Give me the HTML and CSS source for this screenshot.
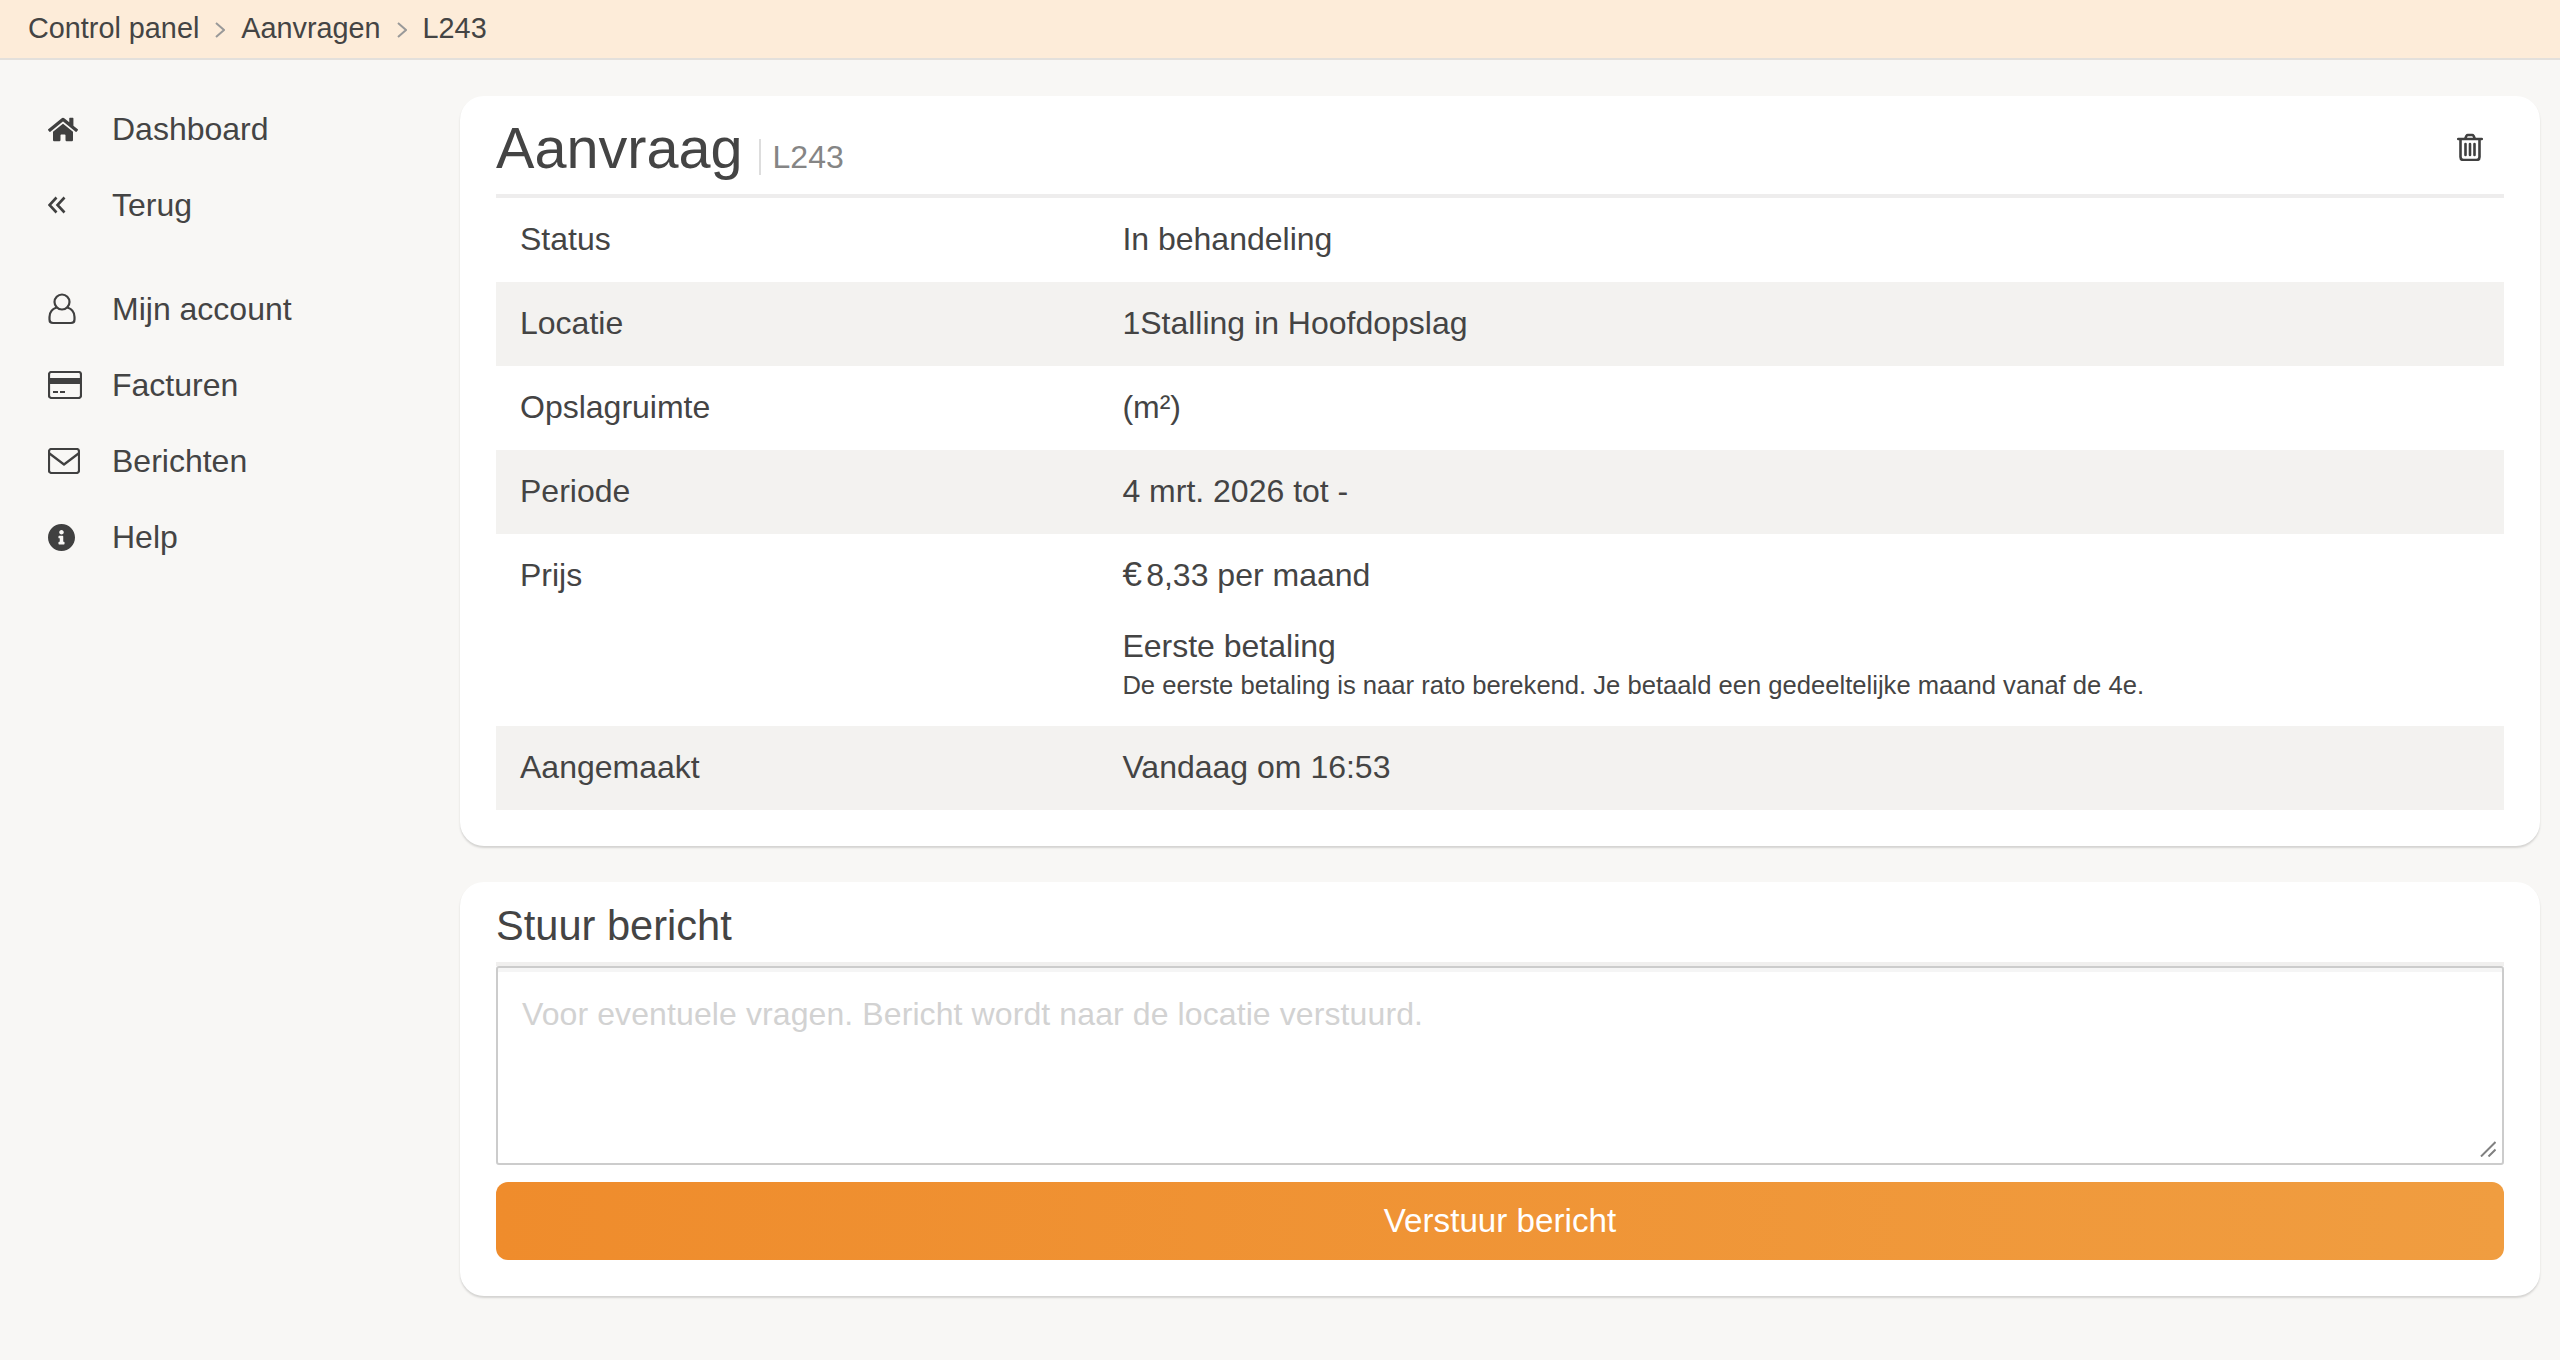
FILE: index.html
```html
<!DOCTYPE html>
<html lang="nl">
<head>
<meta charset="utf-8">
<title>Aanvraag L243</title>
<link rel="stylesheet" href="styles.css">
</head>
<body>
<nav class="crumbs">
  <a class="crumb">Control panel</a>
  <svg class="chev" viewBox="0 0 10 16"><path d="M1 1l8 7-8 7"/></svg>
  <a class="crumb">Aanvragen</a>
  <svg class="chev" viewBox="0 0 10 16"><path d="M1 1l8 7-8 7"/></svg>
  <a class="crumb">L243</a>
</nav>
<div class="layout">
  <aside class="side">
    <ul class="menu">
      <li class="item"><span class="ico"><svg class="i-home" viewBox="0 0 576 512"><path class="fill" d="M280.37 148.26L96 300.11V464a16 16 0 0 0 16 16l112.06-.29a16 16 0 0 0 15.92-16V368a16 16 0 0 1 16-16h64a16 16 0 0 1 16 16v95.64a16 16 0 0 0 16 16.05L464 480a16 16 0 0 0 16-16V300L295.67 148.26a12.19 12.19 0 0 0-15.3 0zM571.6 251.47L488 182.56V44.05a12 12 0 0 0-12-12h-56a12 12 0 0 0-12 12v72.61L318.47 43a48 48 0 0 0-61 0L4.34 251.47a12 12 0 0 0-1.6 16.9l25.5 31A12 12 0 0 0 45.15 301l235.22-193.74a12.19 12.19 0 0 1 15.3 0L530.9 301a12 12 0 0 0 16.9-1.6l25.5-31a12 12 0 0 0-1.7-16.93z"/></svg></span>Dashboard</li>
      <li class="item"><span class="ico"><svg class="i-back" viewBox="0 0 18 18"><path class="line-b" d="M8.500 1.500L1.500 9l7 7.500M16.500 1.500L9.500 9l7 7.500"/></svg></span>Terug</li>
    </ul>
    <ul class="menu">
      <li class="item"><span class="ico"><svg class="i-user" viewBox="0 0 28 32"><circle class="line" cx="14" cy="9" r="7.500"/><path class="line" d="M8.500 14.500C4 16 1.500 19 1.500 24v2.500c0 2 1.500 3.500 3.500 3.500h18c2 0 3.500-1.500 3.500-3.500V24c0-5-2.500-8-7-9.500"/></svg></span>Mijn account</li>
      <li class="item"><span class="ico"><svg class="i-card" viewBox="0 0 34 28"><rect class="line" x="1" y="1" width="32" height="26" rx="2.500"/><rect class="fill" x="1" y="7" width="32" height="6"/><rect class="fill" x="5" y="20" width="5" height="2"/><rect class="fill" x="12" y="20" width="5" height="2"/></svg></span>Facturen</li>
      <li class="item"><span class="ico"><svg class="i-mail" viewBox="0 0 32 26"><rect class="line" x="1" y="1" width="30" height="24" rx="2.500"/><path class="line" d="M1.500 5.500L16 16.500 30.500 5.500"/></svg></span>Berichten</li>
      <li class="item"><span class="ico"><svg class="i-info" viewBox="8 8 496 496"><path class="fill" d="M256 8C119.043 8 8 119.083 8 256c0 136.997 111.043 248 248 248s248-111.003 248-248C504 119.083 392.957 8 256 8zm0 110c23.196 0 42 18.804 42 42s-18.804 42-42 42-42-18.804-42-42 18.804-42 42-42zm56 254c0 6.627-5.373 12-12 12h-88c-6.627 0-12-5.373-12-12v-24c0-6.627 5.373-12 12-12h12v-64h-12c-6.627 0-12-5.373-12-12v-24c0-6.627 5.373-12 12-12h64c6.627 0 12 5.373 12 12v100h12c6.627 0 12 5.373 12 12v24z"/></svg></span>Help</li>
    </ul>
  </aside>
  <main class="main">
    <section class="card">
      <header class="card-head">
        <h1 class="title">Aanvraag</h1>
        <span class="sub">L243</span>
        <svg class="i-trash" viewBox="0 0 26 28"><path class="line-t" d="M1.200 6h23.600M8 6l1.500-3.200c.3-.5.800-.8 1.300-.8h4.400c.5 0 1 .3 1.300.8L18 6M3.500 6v18c0 1.700 1.300 3 3 3h13c1.700 0 3-1.300 3-3V6"/><path class="line-t" d="M8.500 11v11M13 11v11M17.500 11v11"/></svg>
      </header>
      <div class="table">
        <div class="row"><div class="cell">Status</div><div class="cell">In behandeling</div></div>
        <div class="row alt"><div class="cell">Locatie</div><div class="cell">1Stalling in Hoofdopslag</div></div>
        <div class="row"><div class="cell">Opslagruimte</div><div class="cell">(m²)</div></div>
        <div class="row alt"><div class="cell">Periode</div><div class="cell">4 mrt. 2026 tot -</div></div>
        <div class="row">
          <div class="cell">Prijs</div>
          <div class="cell">
            <p class="price"><span class="eur">€</span>8,33 per maand</p>
            <p class="first">Eerste betaling</p>
            <p class="note">De eerste betaling is naar rato berekend. Je betaald een gedeeltelijke maand vanaf de 4e.</p>
          </div>
        </div>
        <div class="row alt"><div class="cell">Aangemaakt</div><div class="cell">Vandaag om 16:53</div></div>
      </div>
    </section>
    <section class="card card-msg">
      <h2 class="msg-title">Stuur bericht</h2>
      <div class="msg-wrap">
        <textarea class="msg" placeholder="Voor eventuele vragen. Bericht wordt naar de locatie verstuurd."></textarea>
        <svg class="grip" viewBox="0 0 16 16"><path d="M1 15.500L15.500 1M8.500 15.500l7-7"/></svg>
      </div>
      <button class="send" type="button">Verstuur bericht</button>
    </section>
  </main>
</div>
</body>
</html>
```
FILE: styles.css
```css
* { box-sizing: border-box; }
html, body { margin: 0; padding: 0; }
body {
  min-height: 1360px;
  background: #f8f7f5;
  color: #444;
  font-family: "Liberation Sans", Arial, sans-serif;
  font-size: 32px;
}
.crumbs {
  display: flex;
  align-items: center;
  height: 60px;
  padding: 0 0 1px 28px;
  background: #fdecd9;
  border-bottom: 2px solid #e3e0dc;
  font-size: 28.8px;
}
.chev { width: 10px; height: 16px; margin: 2px 16px 0; }
.chev path { fill: none; stroke: #999; stroke-width: 2; }
.layout { display: flex; }
.side { width: 460px; flex: none; padding: 31px 0 0 48px; }
.menu { list-style: none; margin: 0 0 28px; padding: 0; }
.item { display: flex; align-items: center; height: 76px; }
.ico { width: 64px; flex: none; display: flex; align-items: center; }
.fill { fill: #404040; }
.line { fill: none; stroke: #404040; stroke-width: 2.2; stroke-linecap: round; stroke-linejoin: round; }
.line-b { fill: none; stroke: #404040; stroke-width: 2.6; }
.line-t { fill: none; stroke: #404040; stroke-width: 2.6; stroke-linecap: round; stroke-linejoin: round; }
.i-home { width: 30px; height: 27px; }
.i-back { width: 18px; height: 18px; }
.i-user { width: 28px; height: 32px; }
.i-card { width: 34px; height: 28px; }
.i-mail { width: 32px; height: 26px; }
.i-info { width: 27px; height: 27px; }
.i-trash { width: 26px; height: 28px; margin-left: auto; margin-right: 21px; align-self: flex-start; margin-top: 18px; }
.main { flex: 1; padding: 36px 20px 64px 0; min-width: 0; }
.card {
  background: #fff;
  border-radius: 24px;
  box-shadow: 0 2px 2px #d4d3d1;
  padding: 0 36px 36px;
}
.card-head {
  display: flex;
  align-items: baseline;
  height: 102px;
  border-bottom: 4px solid #eeeded;
  padding-top: 19px;
}
.title { margin: 0; font-size: 57.6px; font-weight: 400; line-height: 66px; }
.sub {
  margin-left: 16px;
  padding-left: 12px;
  border-left: 2px solid #ddd;
  color: #858585;
  font-size: 32px;
  line-height: 36px;
}
.row { display: grid; grid-template-columns: 30% 70%; line-height: 36px; }
.cell { padding: 23px 24px 25px; }
.alt { background: #f3f2f0; }
.row p { margin: 0; }
.eur { font-size: 35px; line-height: 0; letter-spacing: 4.3px; }
.row .first { margin-top: 35px; }
.row .note { margin-top: 5px; font-size: 25.6px; line-height: 32px; }
.card-msg { margin-top: 36px; }
.msg-title {
  margin: 0;
  height: 84px;
  padding-top: 20px;
  font-size: 41.6px;
  font-weight: 400;
  line-height: 48px;
  border-bottom: 4px solid #f0efee;
}
.msg-wrap { position: relative; }
.msg {
  display: block;
  width: 100%;
  height: 199px;
  padding: 28px 24px;
  border: 2px solid #ccc;
  border-radius: 3px;
  box-shadow: inset 0 4px 0 #f5f5f5;
  font: 32px/36px "Liberation Sans", Arial, sans-serif;
  letter-spacing: .1px;
  color: #404040;
  outline: none;
  resize: none;
}
.msg::placeholder { color: #d2d2d2; font-weight: 300; opacity: 1; }
.grip { position: absolute; right: 8px; bottom: 8px; width: 16px; height: 16px; pointer-events: none; }
.grip path { fill: none; stroke: #808080; stroke-width: 2; }
.send {
  display: block;
  width: 100%;
  height: 78px;
  margin-top: 17px;
  border: 0;
  border-radius: 12px;
  background: linear-gradient(90deg, #ef8c2c, #f09d40);
  color: #fff;
  font: 33.2px "Liberation Sans", Arial, sans-serif;
  padding: 0;
}
```
